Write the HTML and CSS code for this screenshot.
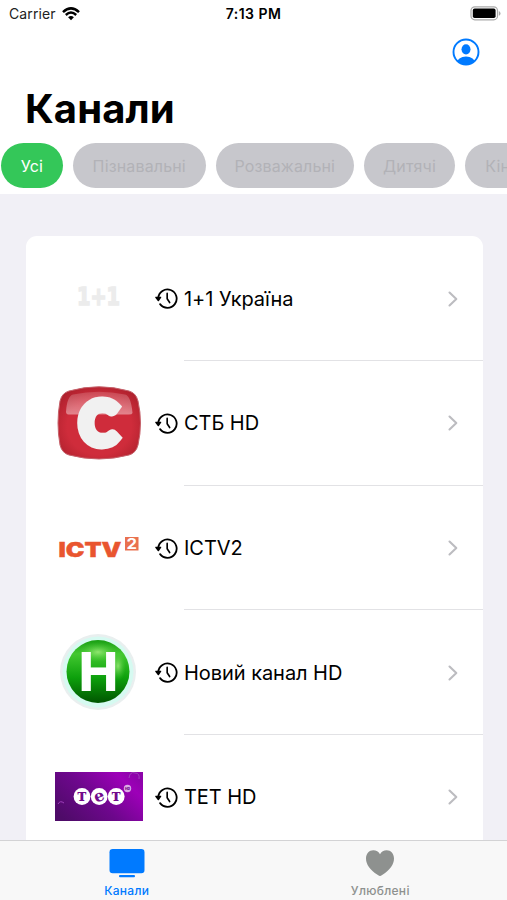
FILE: index.html
```html
<!DOCTYPE html>
<html lang="uk">
<head>
	<meta charset="UTF-8">
	<meta name="viewport" content="width=device-width, initial-scale=1">
	<title>Канали</title>
	<link rel="stylesheet" href="styles.css">
</head>
<body>
	<!-- shared icons -->
	<svg class="sprite" width="0" height="0">
		<symbol id="history" viewBox="0 0 24 24">
			<path d="M3.4 11.5A9.6 9.6 0 1 1 5.3 17.9" fill="none" stroke="#000" stroke-width="1.9" stroke-linecap="round"/>
			<path d="M.6 10.1H6.2Q6.9 10.2 6.4 11.2L4.1 14.5Q3.5 15.3 2.9 14.5L.3 11.2Q0 10.3.6 10.1Z"/>
			<path d="M12.7 6.7V12.3L15.3 16.2" fill="none" stroke="#000" stroke-width="1.7" stroke-linecap="round" stroke-linejoin="round"/>
		</symbol>
		<symbol id="chevron" viewBox="0 0 10 16">
			<path d="M1.5 1.5L8.3 8L1.5 14.5" fill="none" stroke="#bcbcc0" stroke-width="2.1" stroke-linecap="round" stroke-linejoin="round"/>
		</symbol>
	</svg>

	<div class="phone">
		<header class="header">
			<div class="status">
				<div class="carrier">
					<span>Carrier</span>
					<svg width="18" height="14" viewBox="0 0 18 14">
						<path d="M1 5.1Q9-2.4 17 5.1" fill="none" stroke="#000" stroke-width="2.5"/>
						<path d="M3.8 8Q9 3.2 14.2 8" fill="none" stroke="#000" stroke-width="2.4"/>
						<path d="M6.1 10.3Q9 7.9 11.9 10.3L9 13.3Z"/>
					</svg>
				</div>
				<time class="time">7:13 PM</time>
				<svg class="battery" width="31" height="15" viewBox="0 0 31 15">
					<rect x="1" y=".8" width="26.5" height="13" rx="3.8" fill="#fff" stroke="#aaa" stroke-width="1.2"/>
					<rect x="2.8" y="2.6" width="22.8" height="9.4" rx="1.8"/>
					<path d="M28.8 5V9.8Q30.5 9 30.5 7.4T28.8 5Z" fill="#aaa"/>
				</svg>
			</div>
			<div class="toolbar">
				<svg width="28" height="28" viewBox="0 0 28 28">
					<clipPath id="face"><circle cx="14" cy="14" r="12.7"/></clipPath>
					<circle cx="14" cy="14" r="12.5" fill="none" stroke="#007aff" stroke-width="1.9"/>
					<ellipse cx="14" cy="11.3" rx="4.5" ry="5.1" fill="#007aff"/>
					<ellipse cx="14" cy="25.2" rx="9.3" ry="6.8" fill="#007aff" clip-path="url(#face)"/>
				</svg>
			</div>
			<h1 class="title">Канали</h1>
			<nav class="chips">
				<a class="chip chip_all active">Усі</a>
				<a class="chip chip_science">Пізнавальні</a>
				<a class="chip chip_fun">Розважальні</a>
				<a class="chip chip_kids">Дитячі</a>
				<a class="chip chip_movies">Кіно</a>
			</nav>
		</header>

		<main class="content">
			<ul class="list">
				<li class="row">
					<svg class="logo" viewBox="0 0 88 88">
						<text x="22" y="49.5" class="logo_1plus1" textLength="43" lengthAdjust="spacingAndGlyphs">1+1</text>
					</svg>
					<div class="info">
						<svg class="history"><use href="#history"/></svg>
						<span class="name">1+1 Україна</span>
						<svg class="chevron"><use href="#chevron"/></svg>
					</div>
				</li>
				<li class="row">
					<svg class="logo" viewBox="0 0 88 88">
						<defs>
							<radialGradient id="stb" cx=".5" cy=".55" r=".65">
								<stop offset=".6" stop-color="#cf2c3b"/>
								<stop offset="1" stop-color="#a91f2b"/>
							</radialGradient>
							<linearGradient id="stb_gloss" x1="0" y1="0" x2="0" y2="1">
								<stop offset="0" stop-color="#fff" stop-opacity=".15"/>
								<stop offset="1" stop-color="#fff" stop-opacity=".42"/>
							</linearGradient>
						</defs>
						<path d="M14 12Q44 3.5 74 12Q81 14 83 22Q88 44 83 66Q81 74 74 76Q44 84 14 76Q7 74 5 66Q1 44 5 22Q7 14 14 12Z" fill="url(#stb)" stroke="#c5626b" stroke-width="1"/>
						<path d="M18 15.5Q44 10 70 15.5Q76 17 77.5 34Q77 36 72 35.5H16Q11 36 11 33Q12 17 18 15.5Z" fill="url(#stb_gloss)"/>
						<text x="24.5" y="66" class="logo_stb" textLength="38" lengthAdjust="spacingAndGlyphs">С</text>
					</svg>
					<div class="info">
						<svg class="history"><use href="#history"/></svg>
						<span class="name">СТБ HD</span>
						<svg class="chevron"><use href="#chevron"/></svg>
					</div>
				</li>
				<li class="row">
					<svg class="logo" viewBox="0 0 88 88">
						<text x="3.5" y="53" class="logo_ictv" textLength="63" lengthAdjust="spacingAndGlyphs">ICTV</text>
						<rect x="70" y="33" width="13.5" height="13.5" fill="#e9714f"/>
						<text x="71.5" y="44.6" class="logo_ictv_two" textLength="10.5" lengthAdjust="spacingAndGlyphs">2</text>
					</svg>
					<div class="info">
						<svg class="history"><use href="#history"/></svg>
						<span class="name">ICTV2</span>
						<svg class="chevron"><use href="#chevron"/></svg>
					</div>
				</li>
				<li class="row">
					<svg class="logo" viewBox="0 0 88 88">
						<defs>
							<linearGradient id="novy" x1="0" y1="0" x2="0" y2="1">
								<stop offset="0" stop-color="#1a9e14"/>
								<stop offset=".22" stop-color="#42c830"/>
								<stop offset=".6" stop-color="#0da00c"/>
								<stop offset="1" stop-color="#005500"/>
							</linearGradient>
							<radialGradient id="novy_shine">
								<stop offset="0" stop-color="#b6f58e" stop-opacity=".7"/>
								<stop offset="1" stop-color="#50cc3c" stop-opacity="0"/>
							</radialGradient>
						</defs>
						<circle cx="43" cy="43" r="38" fill="#e9efef"/>
						<circle cx="43" cy="43" r="35.5" fill="#d6faf1"/>
						<circle cx="43" cy="42.5" r="31.5" fill="url(#novy)"/>
						<ellipse cx="43" cy="23" rx="19" ry="10" fill="url(#novy_shine)"/>
						<ellipse cx="63" cy="37" rx="8" ry="15" fill="url(#novy_shine)"/>
						<text x="23.8" y="62.2" class="logo_novy" textLength="39.4" lengthAdjust="spacingAndGlyphs">Н</text>
					</svg>
					<div class="info">
						<svg class="history"><use href="#history"/></svg>
						<span class="name">Новий канал HD</span>
						<svg class="chevron"><use href="#chevron"/></svg>
					</div>
				</li>
				<li class="row">
					<svg class="logo" viewBox="0 0 88 88">
						<defs>
							<linearGradient id="tet" x1="0" y1=".8" x2="1" y2=".2">
								<stop offset="0" stop-color="#4e0b68"/>
								<stop offset=".45" stop-color="#6d078c"/>
								<stop offset=".85" stop-color="#9d00b8"/>
								<stop offset="1" stop-color="#8d03aa"/>
							</linearGradient>
						</defs>
						<rect x="0" y="19" width="88" height="49" fill="url(#tet)"/>
						<path d="M74 25Q75 18 80 20Q85 20 84 26M3 51Q5 47 9 50" fill="none" stroke="#a040bc" stroke-width="1"/>
						<circle cx="27" cy="43.5" r="8.4" fill="#fff"/>
						<circle cx="44.2" cy="43.5" r="8.4" fill="#fff"/>
						<circle cx="61.2" cy="43.5" r="8.4" fill="#fff"/>
						<circle cx="72.5" cy="35.5" r="3.7" fill="#dba9e5"/>
						<g class="logo_tet">
							<text x="27" y="48">т</text>
							<text x="44.2" y="48.2" transform="rotate(-20 44.2 43.5)">е</text>
							<text x="61.2" y="48">т</text>
						</g>
						<text x="72.5" y="36.8" class="logo_tet_hd">HD</text>
					</svg>
					<div class="info">
						<svg class="history"><use href="#history"/></svg>
						<span class="name">ТЕТ HD</span>
						<svg class="chevron"><use href="#chevron"/></svg>
					</div>
				</li>
			</ul>
		</main>

		<nav class="tabs">
			<a class="tab selected">
				<svg width="36" height="30" viewBox="0 0 36 30">
					<rect x=".5" y="1" width="35" height="24.2" rx="3.2"/>
					<rect x="10" y="27" width="16" height="2.3" rx="1"/>
				</svg>
				<span class="tab_name">Канали</span>
			</a>
			<a class="tab">
				<svg width="36" height="30" viewBox="0 0 36 30">
					<path d="M18 28Q17.3 28 15.5 26.8C8 21.8 4 16.5 4 10.5C4 5.5 7.2 2.2 11.3 2.2C14.2 2.2 16.7 3.7 18 6.2C19.3 3.7 21.8 2.2 24.7 2.2C28.8 2.2 32 5.5 32 10.5C32 16.5 28 21.8 20.5 26.8Q18.7 28 18 28Z"/>
				</svg>
				<span class="tab_name">Улюблені</span>
			</a>
		</nav>
	</div>
</body>
</html>
```
FILE: styles.css
```css
* {
	box-sizing: border-box;
}
body {
	margin: 0;
	font-family: Inter, "Liberation Sans", sans-serif;
	color: #000;
}
.sprite {
	display: block;
}
.phone {
	display: flex;
	flex-direction: column;
	width: 507px;
	height: 900px;
	overflow: hidden;
	background: #f1f0f6;
}

/* header */
.header {
	flex: none;
	height: 194px;
	background: #fff;
}
.status {
	display: grid;
	grid-template-columns: 1fr auto 1fr;
	align-items: center;
	height: 27px;
	padding: 0 6px 0 9px;
	font-size: 14px;
}
.carrier {
	display: flex;
	align-items: center;
	gap: 6px;
	color: #222;
	letter-spacing: 0.1px;
}
.time {
	margin-right: 3px;
	font-size: 14px;
	font-weight: 600;
	letter-spacing: 0.45px;
}
.battery {
	justify-self: end;
}
.toolbar {
	display: flex;
	justify-content: flex-end;
	height: 56px;
	padding: 11px 27px 0 0;
}
.title {
	height: 60px;
	margin: 0;
	padding-left: 25px;
	font-size: 40px;
	line-height: 52px;
	font-weight: 700;
	letter-spacing: 0.1px;
}
.chips {
	display: flex;
	gap: 10px;
	padding-left: 1px;
	overflow: hidden;
}
.chip {
	flex: none;
	height: 45px;
	border-radius: 23px;
	background: #c7c7cc;
	color: #b2b2b7;
	font-size: 16px;
	line-height: 46px;
	text-align: center;
	letter-spacing: 0.15px;
}
.chip.active {
	background: #34c759;
	color: #fff;
}
.chip_all {
	width: 62px;
}
.chip_science {
	width: 132.5px;
}
.chip_fun {
	width: 138.5px;
}
.chip_kids {
	width: 91px;
}
.chip_movies {
	width: 75px;
}

/* channel list */
.content {
	flex: 1;
	min-height: 0;
	padding: 42.4px 24.5px 0 25.5px;
	overflow: hidden;
}
.list {
	margin: 0;
	padding: 0;
	list-style: none;
	background: #fff;
	border-radius: 11px;
}
.row {
	display: flex;
	align-items: center;
	height: 124.67px;
	padding-left: 29px;
}
.logo {
	flex: none;
	width: 88px;
	height: 88px;
}
.info {
	position: relative;
	display: flex;
	flex: 1;
	align-items: center;
	height: 100%;
	padding: 0 24.5px 0 12px;
}
.info::after {
	content: "";
	position: absolute;
	right: 0;
	bottom: 0;
	left: 41px;
	height: 1px;
	background: #e2e2e5;
}
.history {
	flex: none;
	width: 23px;
	height: 23px;
	margin-right: 6.5px;
}
.name {
	flex: 1;
	font-size: 20px;
	line-height: 26px;
	letter-spacing: -0.05px;
}
.chevron {
	width: 10px;
	height: 16px;
}

/* logo lettering */
.logo text {
	font-family: Inter, "Liberation Sans", sans-serif;
	font-weight: 900;
}
.logo .logo_1plus1 {
	font-family: "DejaVu Sans", sans-serif;
	font-size: 24px;
	font-weight: 700;
	fill: #ececec;
	stroke: #ececec;
	stroke-width: 1.5px;
}
.logo .logo_stb {
	font-family: Lato, sans-serif;
	font-size: 61px;
	fill: #f1f1f1;
	stroke: #f1f1f1;
	stroke-width: 9px;
}
.logo .logo_ictv {
	font-size: 20px;
	fill: #e9552f;
	stroke: #e9552f;
	stroke-width: 0.4px;
}
.logo .logo_ictv_two {
	font-size: 14px;
	font-weight: 700;
	fill: #fff;
}
.logo .logo_novy {
	font-size: 54px;
	font-weight: 800;
	fill: #fff;
}
.logo_tet text {
	font-family: "DejaVu Serif", serif;
	font-size: 16px;
	font-weight: 700;
	fill: #730b8c;
	text-anchor: middle;
}
.logo .logo_tet_hd {
	font-size: 3.5px;
	fill: #730b8c;
	text-anchor: middle;
}

/* tab bar */
.tabs {
	display: flex;
	flex: none;
	height: 60.5px;
	border-top: 1px solid #d3d3d5;
	background: #f8f8f8;
}
.tab {
	display: flex;
	flex: 1;
	flex-direction: column;
	align-items: center;
	padding-top: 7.5px;
	color: #8e918f;
	fill: currentColor;
}
.tab.selected {
	color: #007aff;
}
.tab_name {
	margin-top: 5px;
	font-size: 12px;
	line-height: 15px;
	font-weight: 500;
	letter-spacing: 0.3px;
}
```
